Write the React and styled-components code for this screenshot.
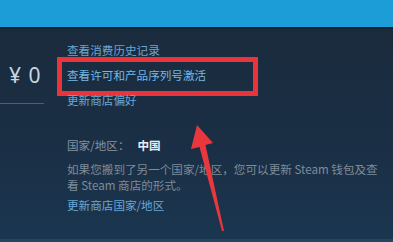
import React from "react";
import styled, { createGlobalStyle } from "styled-components";

const GlobalStyle = createGlobalStyle`
  html, body {
    margin: 0;
    padding: 0;
    background: #1b2a3c;
  }
  body {
    font-family: "Noto Sans CJK SC", "Noto Sans", sans-serif;
  }
`;

const Page = styled.div`
  width: 393px;
  height: 242px;
  overflow: hidden;
  position: relative;
  background: linear-gradient(180deg, #1b2a3b 0%, #1a2f45 60%, #1a3650 100%);
  display: flex;
  flex-direction: column;
`;

const TopBar = styled.div`
  height: 27px;
  flex: none;
  background: #1c9dd8;
  border-bottom: 2px solid #152130;
`;

const Body = styled.div`
  flex: 1;
  display: flex;
  gap: 23px;
  position: relative;
`;

const Balance = styled.div`
  width: 44px;
  flex: none;
  padding-top: 28px;
`;

const Amount = styled.div`
  height: 36px;
  line-height: 36px;
  padding: 0 0 10px 9px;
  font-family: "Noto Sans", sans-serif;
  font-size: 21px;
  word-spacing: 2px;
  color: #c9d6e0;
  border-bottom: 1px solid #4a6074;
`;

const Content = styled.div`
  padding-top: 9px;
  display: flex;
  flex-direction: column;
`;

const LinkList = styled.div`
  display: flex;
  flex-direction: column;
`;

const Link = styled.a`
  position: relative;
  display: block;
  font-size: 11.6px;
  line-height: ${(p) => p.$lh || 25}px;
  color: ${(p) => (p.$bright ? "#74b8e6" : "#6aa6d4")};
  text-decoration: none;
  white-space: nowrap;
  margin-top: ${(p) => p.$mt || 0}px;
`;

const Highlight = styled.span`
  position: absolute;
  left: -10px;
  top: -6px;
  width: 201px;
  height: 39px;
  box-sizing: border-box;
  border: 5px solid #e8343a;
  pointer-events: none;
`;

const Country = styled.div`
  margin-top: 24px;
  font-size: 11.6px;
  line-height: 16px;
  color: #8593a0;
  white-space: nowrap;

  strong {
    color: #e6edf2;
    font-weight: 700;
    margin-left: 8px;
  }
`;

const Note = styled.p`
  margin: 8px 0 0;
  width: 312px;
  font-size: 11.6px;
  line-height: 16px;
  color: #7e8c99;
`;

const Arrow = styled.svg`
  position: absolute;
  left: 185px;
  top: 120px;
  width: 45px;
  height: 120px;
`;

const BottomEdge = styled.div`
  height: 3px;
  flex: none;
  background: #244560;
`;

const App = () => {
  return (
    <>
      <GlobalStyle />
      <Page>
        <TopBar />
        <Body>
          <Balance>
            <Amount>¥ 0</Amount>
          </Balance>
          <Content>
            <LinkList>
              <Link href="#">查看消费历史记录</Link>
              <Link href="#" $bright>
                查看许可和产品序列号激活
                <Highlight />
              </Link>
              <Link href="#">更新商店偏好</Link>
            </LinkList>
            <Country>
              国家/地区：<strong>中国</strong>
            </Country>
            <Note>
              如果您搬到了另一个国家/地区，您可以更新 Steam 钱包及查看 Steam 商店的形式。
            </Note>
            <Link href="#" $lh={16} $mt={4}>
              更新商店国家/地区
            </Link>
          </Content>
        </Body>
        <BottomEdge />
        <Arrow viewBox="185 120 45 120">
          <polygon
            points="197,125 213,143 205.5,145 224,231 222,231 199.5,147 191,149"
            fill="#e8383d"
          />
        </Arrow>
      </Page>
    </>
  );
};

export default App;
